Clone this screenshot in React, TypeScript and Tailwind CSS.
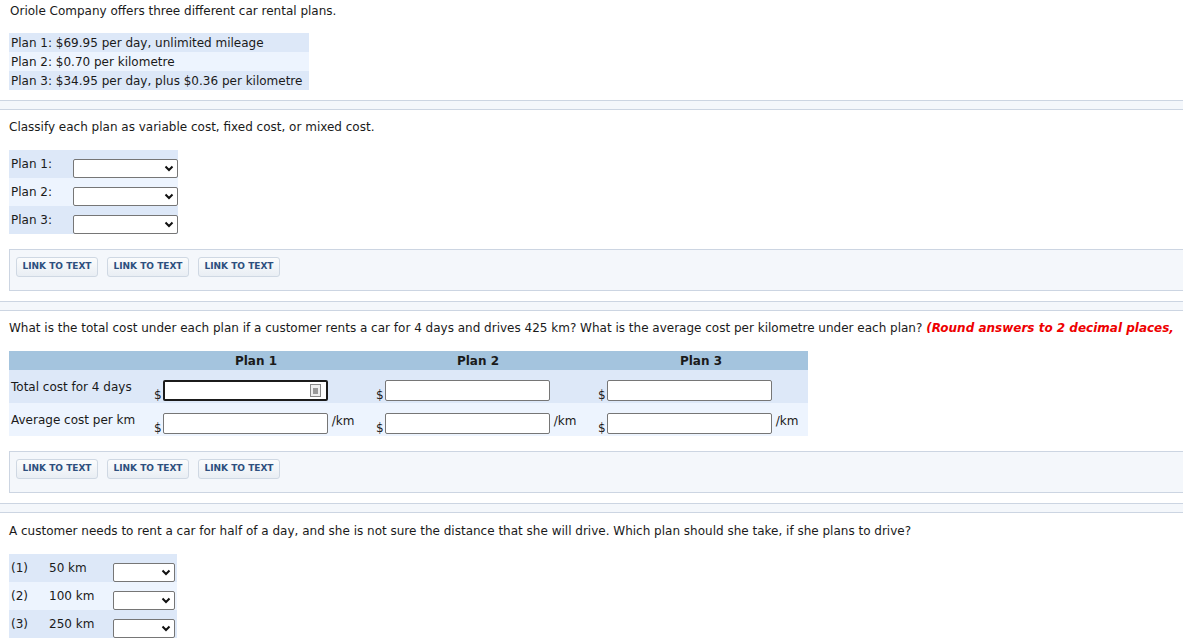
import React from 'react'

const font = { fontFamily: '"DejaVu Sans", Verdana, sans-serif' }

function Divider() {
  return <div className="h-[10px] border-y border-[#ccd5e2] bg-[#f4f7fb]" />
}

function Select({ w = 'w-[105px]' }: { w?: string }) {
  return (
    <div className={`${w} h-[19px] border border-[#767676] rounded-[2px] bg-white flex items-center justify-end pr-[3px]`}>
      <svg width="10" height="7" viewBox="0 0 10 7">
        <path d="M1.5 1.5 L5 5 L8.5 1.5" fill="none" stroke="#111" strokeWidth="2" />
      </svg>
    </div>
  )
}

function LinkBox() {
  return (
    <div className="ml-[9px] h-[42px] border-y border-l border-[#ccd5e2] bg-[#f4f7fb] flex items-center gap-[9px] pl-[6px] pb-[7px]">
      {[0, 1, 2].map(i => (
        <div
          key={i}
          className="h-[20px] w-[82px] flex items-center justify-center rounded-[3px] border border-[#cfd8e3] bg-gradient-to-b from-[#fbfcfd] to-[#e9eef4] text-[9px] font-bold text-[#2d4f7e]"
        >
          LINK TO TEXT
        </div>
      ))}
    </div>
  )
}

function Money({ boxed = false, km = false }: { boxed?: boolean; km?: boolean }) {
  return (
    <div className="flex items-end">
      <span className="text-[12px] leading-[12px] mr-[1px]">$</span>
      <div
        className={`w-[165px] h-[21px] bg-white rounded-[2px] flex items-center justify-end pr-[5px] ${
          boxed ? 'border-2 border-[#1b1b1b]' : 'border border-[#767676]'
        }`}
      >
        {boxed && (
          <div className="w-[11px] h-[13px] border border-[#888] bg-[#eee] flex items-center justify-center">
            <div className="w-[5px] h-[6px] bg-[#999]" />
          </div>
        )}
      </div>
      {km && <span className="ml-[4px] mb-[4px] text-[12px]">/km</span>}
    </div>
  )
}

export default function App() {
  return (
    <div className="w-[1183px] h-[640px] overflow-hidden bg-white text-[12px] text-[#1a1a1a] whitespace-nowrap" style={font}>
      <div className="pt-[3px] pl-[10px] leading-[17px]">Oriole Company offers three different car rental plans.</div>

      <div className="mt-[13px] ml-[9px] w-[300px]">
        <div className="h-[19px] pl-[2px] flex items-center bg-[#dde8f8]">Plan 1: $69.95 per day, unlimited mileage</div>
        <div className="h-[19px] pl-[2px] flex items-center bg-[#edf4fe]">Plan 2: $0.70 per kilometre</div>
        <div className="h-[19px] pl-[2px] flex items-center bg-[#dde8f8]">Plan 3: $34.95 per day, plus $0.36 per kilometre</div>
      </div>

      <div className="mt-[10px]">
        <Divider />
      </div>

      <div className="mt-[9px] pl-[9px] leading-[17px]">Classify each plan as variable cost, fixed cost, or mixed cost.</div>

      <div className="mt-[14px] ml-[9px] w-[169px]">
        {['Plan 1:', 'Plan 2:', 'Plan 3:'].map((p, i) => (
          <div key={p} className={`h-[28px] flex ${i % 2 ? 'bg-[#edf4fe]' : 'bg-[#dde8f8]'}`}>
            <div className="w-[64px] pl-[2px] pt-[5px]">{p}</div>
            <div className="pt-[9px]">
              <Select />
            </div>
          </div>
        ))}
      </div>

      <div className="mt-[15px]">
        <LinkBox />
      </div>

      <div className="mt-[10px]">
        <Divider />
      </div>

      <div className="mt-[9px] pl-[9px] leading-[17px] overflow-hidden">
        What is the total cost under each plan if a customer rents a car for 4 days and drives 425 km? What is the average cost per kilometre under each plan?{' '}
        <span className="text-[#ee0000] font-bold italic">(Round answers to 2 decimal places,</span>
      </div>

      <div className="mt-[14px] ml-[9px] w-[799px] overflow-hidden">
        <div className="h-[19px] bg-[#a4c4de] grid grid-cols-[136px_222px_222px_224px] font-bold items-center">
          <div />
          <div className="text-center">Plan 1</div>
          <div className="text-center">Plan 2</div>
          <div className="text-center">Plan 3</div>
        </div>
        <div className="h-[33px] bg-[#dde8f8] grid grid-cols-[145px_222px_222px_210px]">
          <div className="pl-[2px] pt-[8px]">Total cost for 4 days</div>
          <div className="pt-[10px]"><Money boxed /></div>
          <div className="pt-[10px]"><Money /></div>
          <div className="pt-[10px]"><Money /></div>
        </div>
        <div className="h-[33px] bg-[#edf4fe] grid grid-cols-[145px_222px_222px_210px]">
          <div className="pl-[2px] pt-[8px]">Average cost per km</div>
          <div className="pt-[9px]"><Money km /></div>
          <div className="pt-[9px]"><Money km /></div>
          <div className="pt-[9px]"><Money km /></div>
        </div>
      </div>

      <div className="mt-[15px]">
        <LinkBox />
      </div>

      <div className="mt-[10px]">
        <Divider />
      </div>

      <div className="mt-[10px] pl-[9px] leading-[17px]">
        A customer needs to rent a car for half of a day, and she is not sure the distance that she will drive. Which plan should she take, if she plans to drive?
      </div>

      <div className="mt-[14px] ml-[9px] w-[168px]">
        {[
          ['(1)', '50 km'],
          ['(2)', '100 km'],
          ['(3)', '250 km'],
        ].map(([n, d], i) => (
          <div key={n} className={`h-[28px] flex ${i % 2 ? 'bg-[#edf4fe]' : 'bg-[#dde8f8]'}`}>
            <div className="w-[40px] pl-[2px] pt-[5px]">{n}</div>
            <div className="w-[64px] pt-[5px]">{d}</div>
            <div className="pt-[9px]">
              <Select w="w-[62px]" />
            </div>
          </div>
        ))}
      </div>
    </div>
  )
}
